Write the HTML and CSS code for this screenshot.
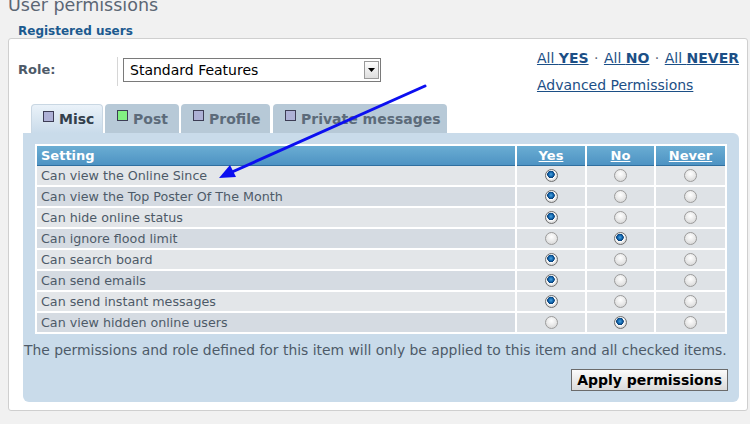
FILE: index.html
```html
<!DOCTYPE html>
<html>
<head>
<meta charset="utf-8">
<link rel="stylesheet" href="styles.css">
</head>
<body>
<h1 class="title">User permissions</h1>
<div class="legend">Registered users</div>
<div class="box">
  <div class="top">
    <div class="role">
      <span class="role-label">Role:</span>
      <span class="sep"></span>
      <div class="select"><span class="select-text">Standard Features</span><span class="select-btn"><svg width="7" height="4" viewBox="0 0 7 4"><path d="M0 0h7L3.5 4z" fill="#000"/></svg></span></div>
    </div>
    <div class="links">
      <div><a href="#">All <b>YES</b></a> <span class="dot">·</span> <a href="#">All <b>NO</b></a> <span class="dot">·</span> <a href="#">All <b>NEVER</b></a></div>
      <div class="adv"><a href="#">Advanced Permissions</a></div>
    </div>
  </div>
  <div class="tabs">
    <div class="tab active"><span class="chk"></span>Misc</div>
    <div class="tab"><span class="chk green"></span>Post</div>
    <div class="tab"><span class="chk"></span>Profile</div>
    <div class="tab"><span class="chk"></span>Private messages</div>
  </div>
  <div class="panel">
    <table class="perm">
      <thead>
        <tr><th class="c-set">Setting</th><th class="c-opt"><u>Yes</u></th><th class="c-opt"><u>No</u></th><th class="c-opt c-last"><u>Never</u></th></tr>
      </thead>
      <tbody>
        <tr><td>Can view the Online Since</td><td><i class="r on"></i></td><td><i class="r"></i></td><td class="c-last"><i class="r"></i></td></tr>
        <tr class="alt"><td>Can view the Top Poster Of The Month</td><td><i class="r on"></i></td><td><i class="r"></i></td><td class="c-last"><i class="r"></i></td></tr>
        <tr><td>Can hide online status</td><td><i class="r on"></i></td><td><i class="r"></i></td><td class="c-last"><i class="r"></i></td></tr>
        <tr class="alt"><td>Can ignore flood limit</td><td><i class="r"></i></td><td><i class="r on"></i></td><td class="c-last"><i class="r"></i></td></tr>
        <tr><td>Can search board</td><td><i class="r on"></i></td><td><i class="r"></i></td><td class="c-last"><i class="r"></i></td></tr>
        <tr class="alt"><td>Can send emails</td><td><i class="r on"></i></td><td><i class="r"></i></td><td class="c-last"><i class="r"></i></td></tr>
        <tr><td>Can send instant messages</td><td><i class="r on"></i></td><td><i class="r"></i></td><td class="c-last"><i class="r"></i></td></tr>
        <tr class="alt"><td>Can view hidden online users</td><td><i class="r"></i></td><td><i class="r on"></i></td><td class="c-last"><i class="r"></i></td></tr>
      </tbody>
    </table>
    <p class="note">The permissions and role defined for this item will only be applied to this item and all checked items.</p>
    <div class="actions"><button class="apply">Apply permissions</button></div>
  </div>
</div>
<svg class="arrow" width="750" height="424" viewBox="0 0 750 424">
  <line x1="425" y1="86" x2="232" y2="172" stroke="#0c0ff0" stroke-width="3" stroke-linecap="round"/>
  <path d="M219 178 L230 165 L236 177 Z" fill="#0c0ff0"/>
</svg>
</body>
</html>
```
FILE: styles.css
```css
html, body {
  margin: 0;
  padding: 0;
}
body {
  background: #f1f1f1;
  font-family: "DejaVu Sans", Verdana, sans-serif;
  width: 750px;
  height: 424px;
  overflow: hidden;
  position: relative;
}
.title {
  margin: -5px 0 0 8px;
  font-size: 17.5px;
  line-height: 20px;
  font-weight: normal;
  color: #5b6674;
}
.legend {
  margin: 10px 0 0 18px;
  font-size: 12px;
  line-height: 13px;
  font-weight: bold;
  color: #1c5a8f;
}
.box {
  margin: 0 2px 0 8px;
  height: 373px;
  box-sizing: border-box;
  background: #fff;
  border: 1px solid #cfcfcf;
  border-radius: 3px;
  padding: 17px 8px 0 14px;
}
.top {
  display: flex;
  justify-content: space-between;
  height: 48px;
}
.role {
  display: flex;
  align-items: flex-start;
}
.role-label {
  font-size: 13px;
  font-weight: bold;
  color: #4d5a68;
  width: 99px;
  margin-left: -5px;
  line-height: 27px;
}
.sep {
  width: 1px;
  height: 29px;
  background: #d6d6d6;
  margin-top: 1px;
}
.select {
  margin-left: 5px;
  margin-top: 2px;
  width: 258px;
  height: 24px;
  box-sizing: border-box;
  border: 1px solid #7a7a7a;
  display: flex;
  align-items: center;
  justify-content: space-between;
  padding: 0 1px 0 6px;
  background: #fff;
}
.select-text {
  font-size: 14px;
  color: #000;
}
.select-btn {
  width: 15px;
  height: 18px;
  box-sizing: border-box;
  border: 1px solid #9a9a9a;
  background: linear-gradient(#fdfdfd, #dedede);
  display: flex;
  align-items: center;
  justify-content: center;
}
.links {
  font-size: 14px;
  line-height: 27px;
  color: #1c4f86;
  margin-top: -11px;
  margin-left: -3px;
}
.links a {
  color: #1c4f86;
  text-decoration: underline;
}
.links b {
  font-weight: bold;
}
.dot {
  color: #5b6674;
  margin: 0 1px;
}
.tabs {
  display: flex;
  gap: 2px;
  margin-left: 8px;
  height: 29px;
}
.tab {
  background: #b7c9d7;
  border-radius: 4px 4px 0 0;
  font-size: 14px;
  font-weight: bold;
  color: #5c6b7a;
  display: flex;
  align-items: center;
  padding: 0 0 0 12px;
  height: 29px;
  box-sizing: border-box;
}
.tab:nth-child(1) { width: 72px; }
.tab:nth-child(2) { width: 74px; }
.tab:nth-child(3) { width: 89px; }
.tab:nth-child(4) { width: 174px; margin-left: 1px; }
.tab.active {
  background: linear-gradient(#eaf2f9, #c9dbea);
  color: #33404c;
  border: 1px solid #c9d7e3;
  border-bottom: none;
  padding-left: 11px;
}
.chk {
  width: 9px;
  height: 9px;
  border: 1px solid #3d3d55;
  background: #aeb1d6;
  margin-right: 5px;
  margin-top: -6px;
}
.chk.green {
  background: #82f082;
}
.panel {
  background: #c9dbea;
  border-radius: 0 6px 6px 6px;
  height: 269px;
  box-sizing: border-box;
  padding: 11px 0 0 1px;
}
.perm {
  margin-left: 11px;
  width: 692px;
  border-collapse: collapse;
  border: 2px solid #fff;
  background: #fff;
  font-size: 12.7px;
}
.perm th {
  height: 19px;
  padding: 0 0 0 4px;
  background: linear-gradient(#6aadd3, #4e93c3);
  border-bottom: 1px solid #2f6f9f;
  color: #fff;
  font-weight: bold;
  text-align: left;
  border-right: 2px solid #fff;
  line-height: 19px;
  font-size: 13px;
}
.perm th.c-opt {
  text-align: center;
  padding: 0;
}
.perm th.c-set {
  width: 474px;
}
.perm th:nth-child(2) { width: 68px; }
.perm th:nth-child(3) { width: 67px; }
.perm .c-last { border-right: none; }
.perm td {
  height: 19px;
  padding: 0;
  background: #e3e6e9;
  border-right: 2px solid #fff;
  border-top: 2px solid #fff;
  text-align: center;
  line-height: 19px;
}
.perm tbody tr:first-child td {
  border-top: 1px solid #fff;
}
.perm td:first-child {
  text-align: left;
  padding-left: 4px;
  color: #4d5a68;
}
.perm tr.alt td:first-child {
  background: #d5dbe2;
}
.perm tr.alt td {
  background: #dee2e6;
}
.r {
  display: inline-block;
  width: 11px;
  height: 11px;
  border-radius: 50%;
  border: 1px solid #9b9b9b;
  background: radial-gradient(circle at 50% 35%, #ffffff 0%, #e9e9e9 50%, #cfcfcf 100%);
  vertical-align: middle;
  position: relative;
  top: -1px;
}
.r.on {
  background: radial-gradient(circle at 45% 40%, #4aa4e2 0, #0e5fa6 2.5px, #0b3f74 3.5px, #ffffff 4px, #dcdcdc 6px);
  border-color: #6f6f6f;
}
.note {
  margin: 7px 0 0 0;
  font-size: 13.88px;
  line-height: 18px;
  color: #4d5a68;
  white-space: nowrap;
}
.actions {
  display: flex;
  justify-content: flex-end;
  margin: 10px 11px 0 0;
}
.apply {
  font-family: "DejaVu Sans", Verdana, sans-serif;
  font-size: 14px;
  font-weight: bold;
  color: #000;
  height: 22px;
  padding: 0 5px;
  border: 1px solid #6b6b6b;
  background: linear-gradient(#fbfbfb, #dadada);
  line-height: 18px;
}
.arrow {
  position: absolute;
  left: 0;
  top: 0;
  pointer-events: none;
}
```
